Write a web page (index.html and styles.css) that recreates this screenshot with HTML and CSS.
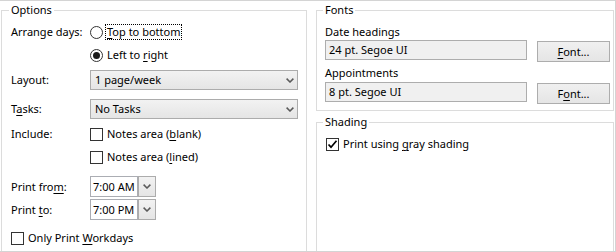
FILE: index.html
```html
<!DOCTYPE html>
<html>
<head>
<meta charset="utf-8">
<link rel="stylesheet" href="styles.css">
</head>
<body>
<div class="frame">
  <section class="group options">
    <div class="group-title">Options</div>
    <div class="row r1"><span class="lbl">Arrange days:</span><span class="radio"></span><span class="choice focus"><u>T</u>op to bottom</span></div>
    <div class="row r2"><span class="lbl"></span><span class="radio on"></span><span class="choice">Left to <u>r</u>ight</span></div>
    <div class="row r3 tall"><span class="lbl">Layout:</span><div class="combo"><span>1 page/week</span><svg class="chev" width="8" height="5" viewBox="0 0 8 5"><path d="M0.6 0.6 L4 4 L7.4 0.6" /></svg></div></div>
    <div class="row r4 tall"><span class="lbl">T<u>a</u>sks:</span><div class="combo"><span>No Tasks</span><svg class="chev" width="8" height="5" viewBox="0 0 8 5"><path d="M0.6 0.6 L4 4 L7.4 0.6" /></svg></div></div>
    <div class="row r5"><span class="lbl">Include:</span><span class="check"></span><span class="choice">Notes area (<u>b</u>lank)</span></div>
    <div class="row r6"><span class="lbl"></span><span class="check"></span><span class="choice">Notes area (<u>l</u>ined)</span></div>
    <div class="row r7 time-row"><span class="lbl">Print fro<u>m</u>:</span><div class="time"><span class="time-val">7:00 AM</span><span class="time-btn"><svg class="chev" width="8" height="5" viewBox="0 0 8 5"><path d="M0.6 0.6 L4 4 L7.4 0.6" /></svg></span></div></div>
    <div class="row r8 time-row"><span class="lbl">Print <u>t</u>o:</span><div class="time"><span class="time-val">7:00 PM</span><span class="time-btn"><svg class="chev" width="8" height="5" viewBox="0 0 8 5"><path d="M0.6 0.6 L4 4 L7.4 0.6" /></svg></span></div></div>
    <div class="row r9"><span class="check"></span><span class="choice">Only Print <u>W</u>orkdays</span></div>
  </section>
  <div class="col-right">
    <section class="group fonts">
      <div class="group-title">Fonts</div>
      <div class="field-label first">Date headings</div>
      <div class="field-row"><div class="font-box">24 pt. Segoe UI</div><button class="btn"><u>F</u>ont...</button></div>
      <div class="field-label second">Appointments</div>
      <div class="field-row"><div class="font-box">8 pt. Segoe UI</div><button class="btn">F<u>o</u>nt...</button></div>
    </section>
    <section class="group shading">
      <div class="group-title">Shading</div>
      <div class="row shade-row"><span class="check checked"><svg width="11" height="11" viewBox="0 0 11 11"><path d="M1.5 5.5 L4 8.2 L9.5 1.8" /></svg></span><span class="choice">Print using <u>g</u>ray shading</span></div>
    </section>
  </div>
</div>
</body>
</html>
```
FILE: styles.css
```css
* { box-sizing: border-box; }
html, body { margin: 0; padding: 0; background: #fff; }
body {
  font-family: "Noto Sans", "Open Sans", sans-serif;
  font-size: 11px;
  color: #000;
  white-space: nowrap;
}
u { text-decoration-thickness: 1px; text-underline-offset: 2px; }

.frame {
  width: 616px;
  height: 252px;
  border-top: 1px solid #d4d4d4;
  border-right: 1px solid #d4d4d4;
  border-bottom: 1px solid #d4d4d4;
  padding: 9px 1px 0 1px;
  display: flex;
  gap: 9px;
  overflow: hidden;
}

.group {
  border: 1px solid #dcdcdc;
  display: flex;
  flex-direction: column;
}
.group-title {
  align-self: flex-start;
  margin: -9px 0 0 -2px;
  padding: 0 2px;
  background: #fff;
  line-height: 16px;
}

.options {
  width: 306px;
  flex: none;
  height: 270px;
  padding-left: 9px;
}

.row { display: flex; align-items: center; height: 16px; line-height: 16px; }
.row.tall { height: 20px; }
.row.time-row { height: 21px; }
.lbl { width: 79px; flex: none; }
.r1 { margin-top: 6px; }
.r2 { margin-top: 7px; }
.r3 { margin-top: 7px; }
.r4 { margin-top: 9px; }
.r5 { margin-top: 7px; }
.r6 { margin-top: 7px; }
.r7 { margin-top: 11px; }
.r8 { margin-top: 2px; }
.r9 { margin-top: 10px; }

.radio {
  width: 13px; height: 13px; flex: none;
  border: 1px solid #333;
  border-radius: 50%;
  background: #fff;
  display: flex; align-items: center; justify-content: center;
}
.radio.on::after {
  content: "";
  width: 7px; height: 7px;
  border-radius: 50%;
  background: #1a1a1a;
}
.check {
  width: 13px; height: 13px; flex: none;
  border: 1px solid #333;
  background: #fff;
  display: flex; align-items: center; justify-content: center;
}
.check svg path { stroke: #000; stroke-width: 1.7; fill: none; }
.choice {
  margin-left: 2px;
  padding-right: 1px;
  padding-left: 1px;
  border: 1px solid transparent;
  line-height: 14px;
}
.choice.focus { border: 1px dotted #000; }

.combo {
  width: 208px; height: 20px;
  border: 1px solid #acacac;
  background: linear-gradient(#f2f2f2, #e5e5e5);
  display: flex; align-items: center; justify-content: space-between;
  padding: 0 3px 0 4px;
}
.chev path { stroke: #5a5a5a; stroke-width: 1.5; fill: none; }

.time { display: flex; height: 21px; }
.time-val {
  width: 48px; height: 21px;
  border: 1px solid #abadb3;
  background: #fff;
  padding-left: 2px;
  line-height: 19px;
}
.time-btn {
  width: 18px; height: 21px;
  border: 1px solid #acacac;
  background: linear-gradient(#f2f2f2, #e5e5e5);
  display: flex; align-items: center; justify-content: center;
}

.col-right {
  width: 298px;
  flex: none;
  display: flex;
  flex-direction: column;
  gap: 11px;
}
.fonts { padding: 0 0 6px 8px; }
.field-label { line-height: 16px; }
.field-label.first { margin-top: 6px; }
.field-label.second { margin-top: 3px; }
.field-row { display: flex; align-items: flex-start; gap: 10px; height: 22px; }
.field-row + .field-label + .field-row { margin-top: 1px; }
.font-box {
  width: 202px; height: 20px;
  border: 1px solid #adadad;
  background: #f0f0f0;
  padding-left: 3px;
  line-height: 18px;
}
.btn {
  margin-top: 1px;
  width: 73px; height: 21px;
  border: 1px solid #adadad;
  background: linear-gradient(#f0f0f0, #e5e5e5);
  font: inherit;
  color: #000;
  padding: 0;
  line-height: 19px;
}
.shading { flex: 1; min-height: 150px; padding-left: 8px; }
.shade-row { margin-top: 6px; }
.shade-row .check { margin-left: 1px; }
```
